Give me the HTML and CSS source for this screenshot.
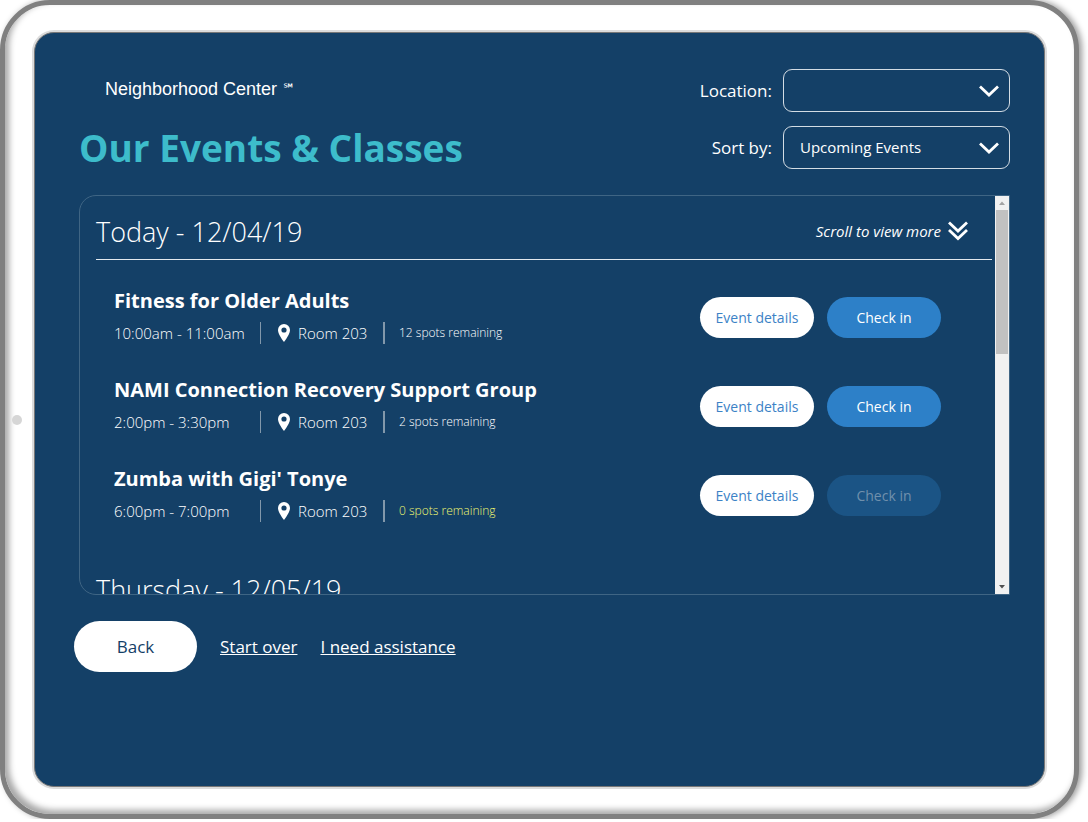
FILE: index.html
```html
<!DOCTYPE html>
<html lang="en">
<head>
<meta charset="utf-8">
<title>Our Events &amp; Classes</title>
<link rel="stylesheet" href="styles.css">
</head>
<body>
<svg class="sprite" aria-hidden="true">
  <symbol id="chevron" viewBox="0 0 20 12"><path d="M1 1.5 10 10 19 1.5" fill="none" stroke="#fff" stroke-width="2.8"/></symbol>
  <symbol id="double-chevron" viewBox="0 0 20 20"><path d="M1 1.5 10 10 19 1.5M1 9 10 17.5 19 9" fill="none" stroke="#fff" stroke-width="2.8"/></symbol>
  <symbol id="pin" viewBox="0 0 12 18"><path fill="#fff" fill-rule="evenodd" d="M6 0a6 6 0 0 1 6 6c0 3.200-3 8-6 12-3-4-6-8.800-6-12a6 6 0 0 1 6-6zm0 3.400a2.600 2.600 0 1 0 0 5.200 2.600 2.600 0 0 0 0-5.200z"/></symbol>
</svg>
<div class="tablet">
  <span class="camera"></span>
  <main class="screen">
    <header class="header">
      <div class="heading">
        <p class="brand">Neighborhood Center <span class="mark">℠</span></p>
        <h1 class="title">Our Events &amp; Classes</h1>
      </div>
      <form class="filters">
        <label class="filter-label" for="location">Location:</label>
        <div class="select-wrap">
          <select class="select" id="location"><option></option></select>
          <svg class="chevron"><use href="#chevron"/></svg>
        </div>
        <label class="filter-label" for="sort">Sort by:</label>
        <div class="select-wrap">
          <select class="select" id="sort"><option>Upcoming Events</option></select>
          <svg class="chevron"><use href="#chevron"/></svg>
        </div>
      </form>
    </header>

    <div class="panel">
      <div class="schedule">
        <section class="day">
          <div class="day-header">
            <h2 class="day-title">Today - 12/04/19</h2>
            <p class="hint">Scroll to view more <svg class="double-chevron"><use href="#double-chevron"/></svg></p>
          </div>
          <ul class="events">
            <li class="event">
              <div class="info">
                <h3 class="name">Fitness for Older Adults</h3>
                <div class="meta">
                  <span class="time">10:00am - 11:00am</span>
                  <span class="room"><svg class="pin"><use href="#pin"/></svg>Room 203</span>
                  <span class="spots">12 spots remaining</span>
                </div>
              </div>
              <button class="button details" type="button">Event details</button>
              <button class="button checkin" type="button">Check in</button>
            </li>
            <li class="event">
              <div class="info">
                <h3 class="name">NAMI Connection Recovery Support Group</h3>
                <div class="meta">
                  <span class="time">2:00pm - 3:30pm</span>
                  <span class="room"><svg class="pin"><use href="#pin"/></svg>Room 203</span>
                  <span class="spots">2 spots remaining</span>
                </div>
              </div>
              <button class="button details" type="button">Event details</button>
              <button class="button checkin" type="button">Check in</button>
            </li>
            <li class="event">
              <div class="info">
                <h3 class="name">Zumba with Gigi' Tonye</h3>
                <div class="meta">
                  <span class="time">6:00pm - 7:00pm</span>
                  <span class="room"><svg class="pin"><use href="#pin"/></svg>Room 203</span>
                  <span class="spots full">0 spots remaining</span>
                </div>
              </div>
              <button class="button details" type="button">Event details</button>
              <button class="button checkin" type="button" disabled>Check in</button>
            </li>
          </ul>
        </section>
        <section class="day">
          <div class="day-header">
            <h2 class="day-title">Thursday - 12/05/19</h2>
          </div>
        </section>
      </div>
      <div class="scrollbar" aria-hidden="true">
        <svg class="arrow" viewBox="0 0 14 14"><path d="M4 9 7 5.500 10 9z" fill="#a3a3a3"/></svg>
        <span class="thumb"></span>
        <svg class="arrow" viewBox="0 0 14 14"><path d="M4 5 7 8.500 10 5z" fill="#505050"/></svg>
      </div>
    </div>

    <nav class="footer">
      <button class="back" type="button">Back</button>
      <a class="link" href="#start">Start over</a>
      <a class="link" href="#help">I need assistance</a>
    </nav>
  </main>
</div>
</body>
</html>
```

FILE: styles.css
```css
* {
  box-sizing: border-box;
}

body {
  margin: 0;
  background: #fff;
  color: #fff;
  font-family: "Open Sans", sans-serif;
}

h1, h2, h3, p, ul {
  margin: 0;
  padding: 0;
}

button, select {
  font-family: inherit;
}

.sprite {
  position: absolute;
  width: 0;
  height: 0;
}

.tablet {
  display: flex;
  align-items: center;
  min-height: calc(100vh - 3px);
  margin-right: 9px;
  padding: 27px 29px;
  padding-left: 7px;
  border: 5px solid #808080;
  border-radius: 50px;
  background: #fff;
  box-shadow: 3px 0 6px rgba(0, 0, 0, 0.4), inset 4px -4px 6px rgba(0, 0, 0, 0.35);
}

.camera {
  flex: none;
  width: 10px;
  height: 10px;
  margin: 20px 12px 0 0;
  border-radius: 50%;
  background: #d6d6d6;
}

.screen {
  flex: 1;
  align-self: stretch;
  padding: 36px 34px 36px 39px;
  border: 1px solid #777;
  border-radius: 20px;
  background: #144067;
  box-shadow: 0 0 0 2px #dcdcdc;
}

.header {
  display: flex;
  justify-content: space-between;
  padding-left: 5px;
}

.brand {
  padding: 10px 0 0 26px;
  font-family: "Liberation Sans", sans-serif;
  font-size: 18px;
  line-height: 20px;
}

.mark {
  font-family: "DejaVu Sans", sans-serif;
  font-size: 13px;
  line-height: 10px;
  vertical-align: 2px;
}

.title {
  margin-top: 26px;
  color: #3dbccb;
  font-size: 37px;
  font-weight: 700;
  line-height: 46px;
}

.filters {
  display: grid;
  grid-template-columns: auto 227px;
  gap: 14px 11px;
  align-items: center;
  align-content: start;
}

.filter-label {
  font-size: 17px;
  text-align: right;
}

.select-wrap {
  display: grid;
  align-items: center;
}

.select {
  grid-area: 1 / 1;
  appearance: none;
  width: 100%;
  height: 43px;
  padding: 0 40px 2px 16px;
  border: 1px solid #d3dce4;
  border-radius: 9px;
  background: transparent;
  color: #fff;
  font-size: 15px;
}

.chevron {
  grid-area: 1 / 1;
  justify-self: end;
  width: 20px;
  height: 12px;
  margin-right: 11px;
  pointer-events: none;
}

.panel {
  display: flex;
  height: 400px;
  margin: 24px 0 0 5px;
  border: 1px solid #3f6584;
  border-radius: 17px 0 0 17px;
}

.schedule {
  flex: 1;
  padding: 0 3px 0 16px;
  overflow-y: auto;
  scrollbar-width: none;
}

.day-header {
  display: flex;
  justify-content: space-between;
  align-items: center;
  height: 64px;
  padding: 7px 24px 0 0;
  border-bottom: 1px solid #e3e9ee;
}

.day-title {
  font-size: 27px;
  font-weight: 300;
}

.hint {
  display: flex;
  align-items: center;
  gap: 7px;
  font-size: 15px;
  font-style: italic;
}

.double-chevron {
  width: 20px;
  height: 20px;
}

.events {
  display: grid;
  gap: 31px;
  padding: 28px 51px 30px 18px;
  list-style: none;
}

.event {
  display: flex;
  align-items: center;
  gap: 13px;
}

.info {
  flex: 1;
}

.name {
  font-size: 20px;
  font-weight: 700;
  line-height: 26px;
}

.meta {
  display: flex;
  align-items: center;
  margin-top: 8px;
  padding-bottom: 2px;
  font-weight: 300;
  line-height: 22px;
}

.time {
  width: 147px;
  border-right: 1px solid #8298ab;
  font-size: 15px;
}

.room {
  display: flex;
  align-items: center;
  gap: 8px;
  width: 124px;
  padding-left: 17px;
  border-right: 2px solid #8298ab;
  font-size: 15px;
}

.pin {
  width: 12px;
  height: 18px;
}

.spots {
  padding-left: 14px;
  font-size: 12px;
}

.full {
  color: #f0f870;
}

.button {
  width: 114px;
  height: 41px;
  padding: 0;
  border: 0;
  border-radius: 21px;
  font-size: 14px;
}

.details {
  background: #fff;
  color: #3c82c6;
}

.checkin {
  background: #2d80c8;
  color: #fff;
}

.checkin:disabled {
  background: #1b5485;
  color: #7090ac;
}

.scrollbar {
  display: flex;
  flex-direction: column;
  width: 14px;
  background: #f1f1f1;
}

.arrow {
  width: 14px;
  height: 14px;
}

.thumb {
  height: 144px;
  margin: 0 1px auto;
  background: #c1c1c1;
}

.footer {
  display: flex;
  align-items: center;
  gap: 23px;
  margin-top: 26px;
}

.back {
  width: 123px;
  height: 51px;
  border: 0;
  border-radius: 26px;
  background: #fff;
  color: #144067;
  font-size: 17px;
}

.link {
  color: #fff;
  font-size: 17px;
}
```
